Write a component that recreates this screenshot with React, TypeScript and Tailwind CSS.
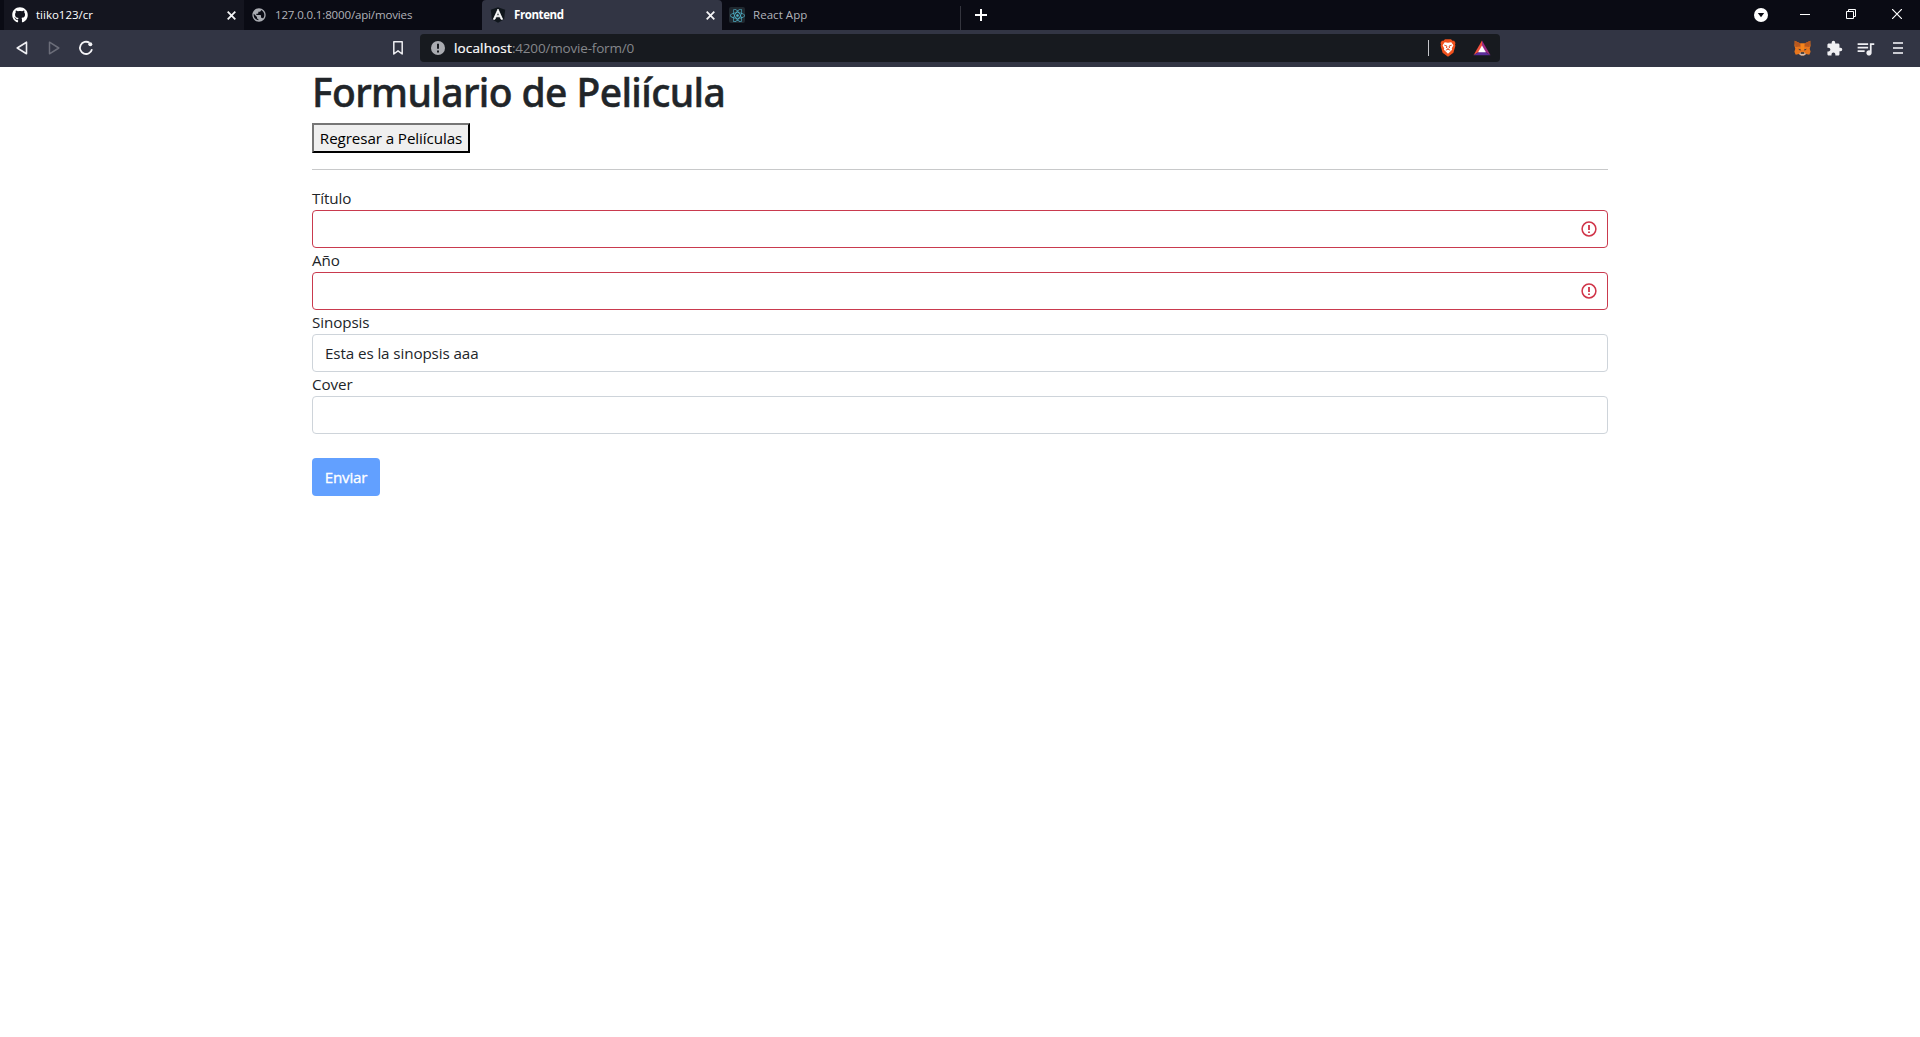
import type { ReactNode } from "react";
import { FaGithub, FaReact } from "react-icons/fa";
import { MdExtension, MdPublic, MdQueueMusic } from "react-icons/md";

function CloseIcon() {
  return (
    <svg width="9" height="9" viewBox="0 0 9 9" stroke="#f4f4f6" strokeWidth="1.8" fill="none">
      <path d="M.7.7l7.6 7.6M8.3.7L.7 8.3" />
    </svg>
  );
}

function AngularIcon() {
  return (
    <svg width="16" height="16" viewBox="0 0 16 16">
      <path d="M8 .3l7.2 2.5-1.1 9.4L8 15.7l-6.1-3.5L.8 2.800z" fill="#10161c" />
      <path d="M8 2l4.700 10.300H11L10 9.800H6l-1 2.500H3.300zM8 5.100L6.600 8.400h2.800z" fill="#fff" stroke="#fff" strokeWidth=".7" />
    </svg>
  );
}

function BraveIcon() {
  return (
    <svg width="16" height="18" viewBox="0 0 16 18">
      <path d="M5 .3h6l1.500 1.500 1.700-.1L15.500 4l-.5 1.600.4 1.100-2 7L8 17.800l-5.400-4.100-2-7L1 5.600.5 4l1.300-2.300 1.700.1z" fill="#f0511d" />
      <path d="M4.700 3.200L8 3.700l3.300-.5 2.100 3-1.600 3.100.3 1.500L8 14.700l-4.100-3.900.3-1.500-1.600-3.100z" fill="#fff" />
      <path d="M4.300 6.200l2.600.8-.5 2M11.700 6.200L9.100 7l.5 2M5.800 11.200L8 10.200l2.200 1M8 10.200V8.700" fill="none" stroke="#e8572c" strokeWidth="1" />
    </svg>
  );
}

function BatIcon() {
  return (
    <svg width="18" height="16" viewBox="0 0 18 16">
      <path d="M9 .5L.5 15.300 9 10z" fill="#f0503c" />
      <path d="M9 .5l8.500 14.800L9 10z" fill="#9b2a83" />
      <path d="M.5 15.300h17L9 10z" fill="#5b2d9b" />
      <path d="M9 5.600l3.900 6.600H5.100z" fill="#fff" />
    </svg>
  );
}

function FoxIcon() {
  return (
    <svg width="17" height="16" viewBox="0 0 17 16">
      <path d="M.7.800L6.500 3.500h4L16.300.8l.3 5-.9 3 .9 3-1.300 3-3.300-.8-2 1.500H7l-2-1.500-3.300.8-1.300-3 .9-3-.9-3z" fill="#e8761d" />
      <path d="M.7.800l5.800 2.700.4 3L1.400 7zM16.300.800l-5.800 2.700-.4 3 5.500.5z" fill="#b8581f" />
      <path d="M6.500 3.500h4l-.4 6.500H6.900z" fill="#f6851b" />
      <path d="M4.200 8.700l2.700.9-.7 1.200zM12.800 8.700l-2.700.9.7 1.200z" fill="#233447" />
      <path d="M5 14l2-1.700h3l2 1.700-2 1.500H7z" fill="#d5bfb2" />
      <path d="M7 12.200h3l.4 1.600H6.600z" fill="#222" />
    </svg>
  );
}

function InvalidIcon() {
  return (
    <svg width="16" height="16" viewBox="0 0 16 16" fill="none" stroke="#d03448" strokeWidth="1.500">
      <circle cx="8" cy="8" r="6.900" />
      <path d="M8 4v4.900M8 10.400v1.600" strokeWidth="1.800" />
    </svg>
  );
}

function Field({ label, value, invalid }: { label: string; value?: string; invalid?: boolean }) {
  return (
    <div>
      <div className="h-6 leading-6">{label}</div>
      <div
        className={`flex h-[38px] items-center justify-between rounded border bg-white pr-2.5 pl-3 ${
          invalid ? "border-[#c93a4e]" : "border-[#ced4da]"
        }`}
      >
        <span>{value}</span>
        {invalid && <InvalidIcon />}
      </div>
    </div>
  );
}

function Tab({ className, icon, children, close }: { className: string; icon: ReactNode; children: ReactNode; close?: boolean }) {
  return (
    <div className={`flex h-[30px] shrink-0 items-center gap-2 ${className}`}>
      {icon}
      <span className="flex-1 whitespace-nowrap">{children}</span>
      {close && <CloseIcon />}
    </div>
  );
}

export default function App() {
  return (
    <div className="flex h-[1037px] w-full flex-col overflow-hidden bg-white font-['Open_Sans',sans-serif]">
      <header className="text-[11.5px]">
        <div className="flex h-[30px] items-center bg-[#0a0b14] pl-1 text-[#b2b3ba]">
          <Tab
            className="w-[240px] bg-[#14151f] pr-2 pl-2 text-white"
            icon={<FaGithub size={16} color="#fff" />}
            close
          >
            tiiko123/cr
          </Tab>
          <Tab className="w-[238px] pl-[7px] tracking-[-0.14px]" icon={<MdPublic size={16} color="#a9abb1" />}>
            127.0.0.1:8000/api/movies
          </Tab>
          <Tab
            className="w-[240px] rounded-t bg-[#323544] pr-[7px] pl-2 font-bold tracking-[-0.4px] text-white"
            icon={<AngularIcon />}
            close
          >
            Frontend
          </Tab>
          <Tab
            className="w-[238px] pl-[7px] tracking-[0.05px]"
            icon={
              <span className="flex size-4 items-center justify-center rounded-[2px] bg-[#20282f]">
                <FaReact size={15} color="#4fb4cc" />
              </span>
            }
          >
            React App
          </Tab>
          <div className="mt-1.5 h-6 w-px bg-[#34353e]" />
          <svg className="ml-[14px]" width="12" height="12" viewBox="0 0 12 12" stroke="#fff" strokeWidth="2">
            <path d="M6 0v12M0 6h12" />
          </svg>
          <div className="ml-auto flex items-center">
            <svg width="14" height="14" viewBox="0 0 14 14">
              <circle cx="7" cy="7" r="7" fill="#fff" />
              <path d="M3.800 5h6.400L7 9.300z" fill="#0a0b14" />
            </svg>
            <svg className="mb-0.5 ml-8" width="10" height="10" viewBox="0 0 10 10" stroke="#fff">
              <path d="M0 5.500h10" />
            </svg>
            <svg className="mb-0.5 ml-9" width="10" height="10" viewBox="0 0 10 10" fill="none" stroke="#fff">
              <path d="M.5 2.500h7v7h-7zM2.500 2.500v-2h7v7h-2" />
            </svg>
            <svg className="mr-[18px] mb-0.5 ml-9" width="10" height="10" viewBox="0 0 10 10" stroke="#fff" strokeWidth="1.200">
              <path d="M0 0l10 10M10 0L0 10" />
            </svg>
          </div>
        </div>

        <div className="flex h-[37px] items-center bg-[#323544] pb-px">
          <svg className="ml-4" width="12" height="14" viewBox="0 0 12 14" fill="none" stroke="#eeeef2" strokeWidth="1.600" strokeLinejoin="round">
            <path d="M10.500 1.200v11.600L1.200 7z" />
          </svg>
          <svg className="ml-5" width="12" height="14" viewBox="0 0 12 14" fill="none" stroke="#6b6d79" strokeWidth="1.500" strokeLinejoin="round">
            <path d="M1.500 1.200v11.600L10.800 7z" />
          </svg>
          <svg className="ml-[18px]" width="16" height="16" viewBox="0 0 16 16" fill="none" stroke="#f4f4f7" strokeWidth="1.800">
            <path d="M11.500 2.800A6.100 6.100 0 1 0 14 9.300" />
            <circle cx="12.300" cy="4.300" r="2" fill="#f4f4f7" stroke="none" />
          </svg>
          <svg className="ml-[299px]" width="10" height="14" viewBox="0 0 10 14" fill="none" stroke="#eeeef2" strokeWidth="1.500" strokeLinejoin="round">
            <path d="M.8.800h8.400v12.200L5 9.800.8 13z" />
          </svg>
          <div className="ml-[17px] flex h-7 w-[1080px] items-center rounded bg-[#171a1f] pl-[11px] text-[13.5px]">
            <svg width="14" height="14" viewBox="0 0 14 14">
              <circle cx="7" cy="7" r="7" fill="#a9abb0" />
              <path d="M7 2.800v5M7 9.500v2" stroke="#171a1f" strokeWidth="2" />
            </svg>
            <span className="ml-[9px] tracking-[0.15px] text-white [-webkit-text-stroke:0.2px_white]">localhost</span>
            <span className="tracking-[-0.18px] text-[#85878b]">:4200/movie-form/0</span>
            <div className="ml-auto h-4 w-px bg-[#c5c6ca]" />
            <div className="mr-[9px] ml-[11px] flex items-center gap-[17px]">
              <BraveIcon />
              <BatIcon />
            </div>
          </div>
          <div className="mr-[17px] ml-auto flex items-center">
            <FoxIcon />
            <MdExtension className="ml-[15px]" size={17} color="#f0f0f3" />
            <MdQueueMusic className="ml-[12px]" size={21} color="#eeeef2" />
            <svg className="ml-[17px]" width="10" height="12" viewBox="0 0 10 12" stroke="#c9cad1" strokeWidth="2">
              <path d="M0 1h10M0 6h10M0 11h10" />
            </svg>
          </div>
        </div>
      </header>

      <main className="mx-auto w-[1296px] text-[15.2px] tracking-[-0.1px] text-[#212529]">
        <h1 className="h-12 font-['Noto_Sans',sans-serif] text-[39px] leading-[49px] font-medium tracking-[-0.6px] whitespace-nowrap [-webkit-text-stroke:0.5px_#212529]">
          Formulario de Peliícula
        </h1>
        <button className="mt-2 flex h-[30px] w-[158px] items-center justify-center border-2 border-t-[#767676] border-r-black border-b-black border-l-[#767676] bg-[#efefef] whitespace-nowrap text-black">
          Regresar a Peliículas
        </button>
        <hr className="my-4 border-t border-[#c8c9ca]" />
        <form>
          <Field label="Título" invalid />
          <Field label="Año" invalid />
          <Field label="Sinopsis" value="Esta es la sinopsis aaa" />
          <Field label="Cover" />
          <button
            type="button"
            className="mt-6 h-[38px] w-[68px] rounded bg-[#62a0ff] tracking-[-0.25px] text-white [-webkit-text-stroke:0.3px_white]"
          >
            Enviar
          </button>
        </form>
      </main>
    </div>
  );
}
